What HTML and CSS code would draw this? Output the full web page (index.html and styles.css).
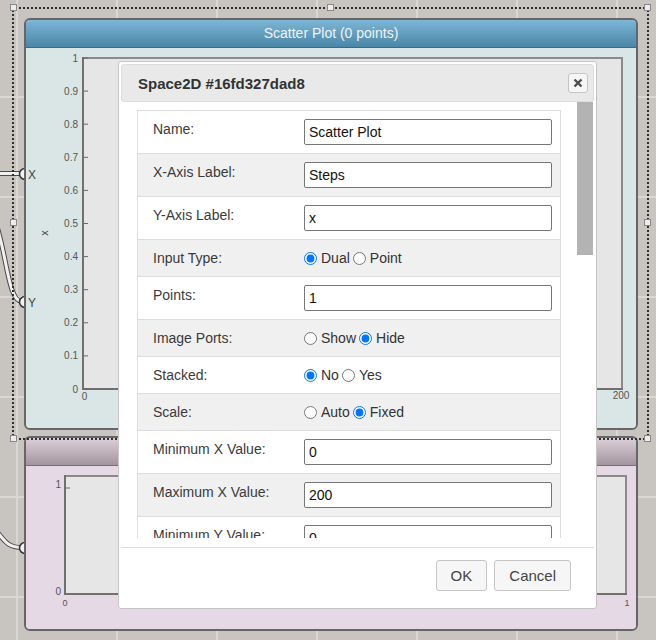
FILE: index.html
```html
<!DOCTYPE html>
<html lang="en">
  <head>
    <meta charset="UTF-8" />
    <title>Space2D editor</title>
    <link rel="stylesheet" href="styles.css">
  </head>
  <body>
    <svg class="wires" width="656" height="640" viewBox="0 0 656 640">
      <path class="wire-out" d="M -5 173.5 L 22 173.5" />
      <path class="wire-in" d="M -5 173.5 L 22 173.5" />
      <path class="wire-out" d="M -40 185 C 10 185, 0 301.5, 22 301.5" />
      <path class="wire-in" d="M -40 185 C 10 185, 0 301.5, 22 301.5" />
      <path class="wire-out" d="M -20 518 C 5 532, 0 547.5, 22 547.5" />
      <path class="wire-in" d="M -20 518 C 5 532, 0 547.5, 22 547.5" />
      <circle class="port" cx="25" cy="174" r="5.5" />
      <circle class="port" cx="25" cy="302" r="5.5" />
      <circle class="port" cx="25" cy="548" r="5.5" />
    </svg>

    <div class="node node-top">
      <div class="node-title">Scatter Plot (0 points)</div>
      <div class="node-body">
        <svg class="chart" width="610" height="380" viewBox="26 48 610 380">
          <rect class="plot" x="83" y="58" width="539" height="331" />
          <path class="axis" d="M 83 57 L 83 389 L 623 389" />
          <g class="ticks">
            <path d="M 84 389 H 88 M 84 355.9 H 88 M 84 322.8 H 88 M 84 289.7 H 88 M 84 256.6 H 88 M 84 223.5 H 88 M 84 190.4 H 88 M 84 157.3 H 88 M 84 124.2 H 88 M 84 91.1 H 88 M 84 58 H 88" />
          </g>
          <g class="tick-labels">
            <text x="78" y="392.5">0</text>
            <text x="78" y="359.4">0.1</text>
            <text x="78" y="326.3">0.2</text>
            <text x="78" y="293.2">0.3</text>
            <text x="78" y="260.1">0.4</text>
            <text x="78" y="227">0.5</text>
            <text x="78" y="193.9">0.6</text>
            <text x="78" y="160.8">0.7</text>
            <text x="78" y="127.7">0.8</text>
            <text x="78" y="94.6">0.9</text>
            <text x="78" y="61.5">1</text>
          </g>
          <text class="x-label" x="84.5" y="399.5">0</text>
          <text class="x-label" x="621" y="398.5">200</text>
          <text class="axis-title" transform="translate(48 233) rotate(-90)">x</text>
          <text class="port-label" x="28" y="178.5">X</text>
          <text class="port-label" x="28" y="306.5">Y</text>
        </svg>
      </div>
    </div>

    <div class="node node-bottom">
      <div class="node-title"></div>
      <div class="node-body">
        <svg class="chart" width="610" height="163" viewBox="26 466 610 163">
          <rect class="plot" x="65" y="476" width="561" height="118" />
          <path class="axis" d="M 65 475 L 65 594 L 627 594" />
          <g class="ticks">
            <path d="M 66 488 H 70" />
          </g>
          <g class="tick-labels">
            <text x="61" y="488">1</text>
            <text x="61" y="595">0</text>
          </g>
          <text class="x-label small" x="65" y="606">0</text>
          <text class="x-label small" x="627" y="606">1</text>
        </svg>
      </div>
    </div>

    <div class="selection">
      <span class="handle" style="left: -4px; top: -5px"></span>
      <span class="handle" style="left: 313px; top: -5px"></span>
      <span class="handle" style="left: 630px; top: -5px"></span>
      <span class="handle" style="left: -4px; top: 210px"></span>
      <span class="handle" style="left: 630px; top: 210px"></span>
      <span class="handle" style="left: -4px; top: 426px"></span>
      <span class="handle" style="left: 313px; top: 426px"></span>
      <span class="handle" style="left: 630px; top: 426px"></span>
    </div>

    <div class="dialog">
      <div class="dialog-header">
        <span class="dialog-title">Space2D #16fd327dad8</span>
        <button class="close-btn" title="Close">
          <svg width="10" height="10" viewBox="0 0 10 10">
            <path d="M 1.5 1.5 L 8.5 8.5 M 8.5 1.5 L 1.5 8.5" />
          </svg>
        </button>
      </div>

      <div class="dialog-body">
        <div class="dialog-scroll">
          <div class="props">
            <div class="prop-row">
              <label class="prop-label">Name:</label>
              <div class="prop-field"><input type="text" value="Scatter Plot" /></div>
            </div>
            <div class="prop-row">
              <label class="prop-label">X-Axis Label:</label>
              <div class="prop-field"><input type="text" value="Steps" /></div>
            </div>
            <div class="prop-row">
              <label class="prop-label">Y-Axis Label:</label>
              <div class="prop-field"><input type="text" value="x" /></div>
            </div>
            <div class="prop-row">
              <label class="prop-label">Input Type:</label>
              <div class="prop-field radios">
                <label class="opt"><input type="radio" name="input-type" checked />Dual</label>
                <label class="opt"><input type="radio" name="input-type" />Point</label>
              </div>
            </div>
            <div class="prop-row">
              <label class="prop-label">Points:</label>
              <div class="prop-field"><input type="text" value="1" /></div>
            </div>
            <div class="prop-row">
              <label class="prop-label">Image Ports:</label>
              <div class="prop-field radios">
                <label class="opt"><input type="radio" name="image-ports" />Show</label>
                <label class="opt"><input type="radio" name="image-ports" checked />Hide</label>
              </div>
            </div>
            <div class="prop-row">
              <label class="prop-label">Stacked:</label>
              <div class="prop-field radios">
                <label class="opt"><input type="radio" name="stacked" checked />No</label>
                <label class="opt"><input type="radio" name="stacked" />Yes</label>
              </div>
            </div>
            <div class="prop-row">
              <label class="prop-label">Scale:</label>
              <div class="prop-field radios">
                <label class="opt"><input type="radio" name="scale" />Auto</label>
                <label class="opt"><input type="radio" name="scale" checked />Fixed</label>
              </div>
            </div>
            <div class="prop-row">
              <label class="prop-label">Minimum X Value:</label>
              <div class="prop-field"><input type="text" value="0" /></div>
            </div>
            <div class="prop-row">
              <label class="prop-label">Maximum X Value:</label>
              <div class="prop-field"><input type="text" value="200" /></div>
            </div>
            <div class="prop-row">
              <label class="prop-label">Minimum Y Value:</label>
              <div class="prop-field"><input type="text" value="0" /></div>
            </div>
            <div class="prop-row">
              <label class="prop-label">Maximum Y Value:</label>
              <div class="prop-field"><input type="text" value="1" /></div>
            </div>
          </div>
        </div>
        <div class="scrollbar"><div class="scroll-thumb"></div></div>
      </div>

      <div class="dialog-footer">
        <button class="dlg-btn">OK</button>
        <button class="dlg-btn">Cancel</button>
      </div>
    </div>
  </body>
</html>
```

FILE: styles.css
```css
* {
  margin: 0;
  padding: 0;
  box-sizing: border-box;
}

body {
  position: relative;
  width: 656px;
  height: 640px;
  overflow: hidden;
  font-family: "Liberation Sans", Arial, sans-serif;
  background-color: #c8c5c0;
  background-image: linear-gradient(90deg, #d9d7d3 2px, transparent 2px),
    linear-gradient(#d9d7d3 2px, transparent 2px);
  background-size: 100px 100px;
  background-position: 16px 0, 0 96px;
}

/* wires + ports */
.wires {
  position: absolute;
  left: 0;
  top: 0;
}

.wire-out {
  fill: none;
  stroke: #4a4a4a;
  stroke-width: 5;
}

.wire-in {
  fill: none;
  stroke: #f0f0f0;
  stroke-width: 3;
}

.port {
  fill: #f2f2f2;
  stroke: #333;
  stroke-width: 1.5;
}

/* nodes */
.node {
  position: absolute;
  left: 24px;
  width: 614px;
  display: flex;
  flex-direction: column;
  border: 2px solid #666;
  border-radius: 6px;
  overflow: hidden;
  z-index: 1;
}

.node-top {
  top: 18px;
  height: 412px;
}

.node-bottom {
  top: 436px;
  height: 195px;
}

.node-title {
  height: 28px;
  line-height: 26px;
  text-align: center;
  font-size: 14px;
  color: #eef4f8;
  border-bottom: 1px solid #3b6a84;
}

.node-top .node-title {
  background: linear-gradient(#7db6d6, #4a86a6);
}

.node-bottom .node-title {
  background: linear-gradient(#dcd0d8, #a3959f);
  border-bottom-color: #7a6e77;
}

.node-body {
  flex: 1;
}

.node-top .node-body {
  background-color: #d9e6e5;
}

.node-bottom .node-body {
  background-color: #e6d9e6;
}

.chart {
  display: block;
}

.plot {
  fill: #e6e6e6;
  stroke: #8a8a8a;
  stroke-width: 2;
}

.axis {
  fill: none;
  stroke: #707070;
  stroke-width: 2;
}

.ticks path {
  stroke: #666;
  stroke-width: 1;
}

.tick-labels text {
  font-size: 10px;
  fill: #555;
  text-anchor: end;
}

.x-label {
  font-size: 10px;
  fill: #555;
  text-anchor: middle;
}

.x-label.small {
  font-size: 9px;
}

.axis-title {
  font-size: 11px;
  fill: #444;
  text-anchor: middle;
}

.port-label {
  font-size: 12px;
  fill: #444;
}

/* selection box */
.selection {
  position: absolute;
  left: 12px;
  top: 7px;
  width: 637px;
  height: 433px;
  border: 2px dotted #2f2f2f;
  z-index: 2;
}

.handle {
  position: absolute;
  width: 7px;
  height: 7px;
  background-color: #ececec;
  border: 1px solid #888;
}

/* dialog */
.dialog {
  position: absolute;
  left: 118px;
  top: 61px;
  width: 479px;
  height: 548px;
  display: flex;
  flex-direction: column;
  padding: 2px;
  background-color: #fff;
  border: 1px solid #c5c5c5;
  border-radius: 3px;
  z-index: 3;
}

.dialog-header {
  height: 38px;
  display: flex;
  align-items: center;
  justify-content: space-between;
  padding: 0 5px 0 16px;
  background-color: #e9e9e9;
  border: 1px solid #ddd;
  border-radius: 3px;
}

.dialog-title {
  font-size: 15px;
  font-weight: bold;
  color: #333;
}

.close-btn {
  width: 20px;
  height: 20px;
  display: flex;
  align-items: center;
  justify-content: center;
  background-color: #f6f6f6;
  border: 1px solid #c5c5c5;
  border-radius: 3px;
}

.close-btn path {
  stroke: #4d4d4d;
  stroke-width: 2.4;
}

.dialog-body {
  height: 436px;
  display: flex;
}

.dialog-scroll {
  flex: 1;
  overflow: hidden;
  padding: 8px 16px 0 16px;
}

.scrollbar {
  width: 17px;
}

.scroll-thumb {
  width: 16px;
  height: 153px;
  background-color: #b3b3b3;
}

.props {
  border: 1px solid #ddd;
}

.prop-row {
  display: flex;
  border-top: 1px solid #ddd;
  font-size: 14px;
}

.prop-row:first-child {
  border-top: none;
}

.prop-row:nth-child(even) {
  background-color: #f0f0f0;
}

.prop-label {
  width: 158px;
  padding: 10px 0 10px 15px;
  line-height: 16px;
  color: #3a3a3a;
}

.prop-field {
  flex: 1;
  display: flex;
  align-items: center;
  padding: 8px;
}

.prop-field input[type="text"] {
  width: 248px;
  height: 26px;
  padding: 0 4px;
  font-family: "Liberation Sans", Arial, sans-serif;
  font-size: 14px;
  color: #111;
  border: 1px solid #767676;
  border-radius: 2px;
  background-color: #fff;
}

.radios {
  padding: 0 8px;
  gap: 3px;
  color: #333;
}

.opt {
  display: inline-flex;
  align-items: center;
  gap: 4px;
}

.opt input {
  width: 13px;
  height: 13px;
  margin: 0;
}

.dialog-footer {
  margin-top: 9px;
  flex: 1;
  display: flex;
  justify-content: flex-end;
  align-items: flex-start;
  gap: 7px;
  padding: 12px 23px 0 0;
  border-top: 1px solid #ddd;
}

.dlg-btn {
  height: 31px;
  padding: 0 14px;
  font-family: "Liberation Sans", Arial, sans-serif;
  font-size: 15px;
  color: #454545;
  background-color: #f6f6f6;
  border: 1px solid #c5c5c5;
  border-radius: 3px;
}
```
